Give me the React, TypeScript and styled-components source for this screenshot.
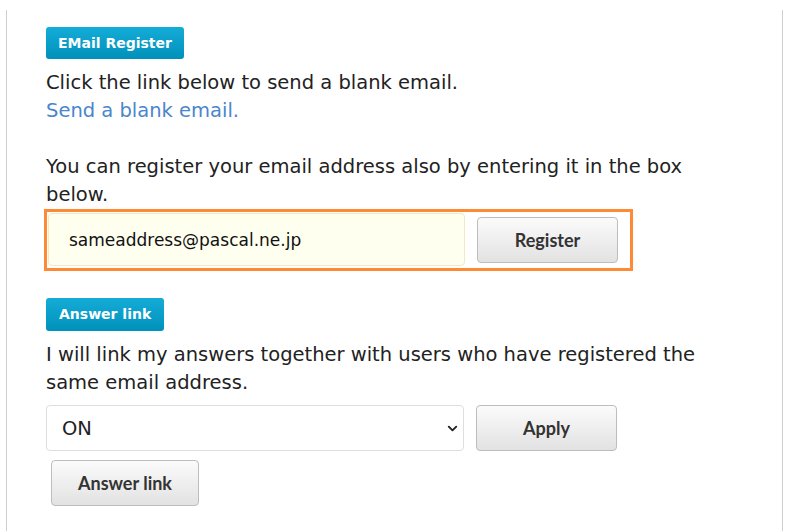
import React from "react";
import styled, { createGlobalStyle } from "styled-components";
import { ChevronDown } from "lucide-react";

const GlobalStyle = createGlobalStyle`
  html, body {
    margin: 0;
    padding: 0;
    background: #fff;
  }
  body {
    font-family: "DejaVu Sans", Verdana, sans-serif;
    color: #222;
  }
`;

const Frame = styled.div`
  margin: 10px 0 0 6px;
  width: 777px;
  min-height: 521px;
  border-left: 1px solid #cfcfcf;
  border-right: 1px solid #cfcfcf;
  box-sizing: border-box;
  padding: 17px 0 0 39px;
`;

const Badge = styled.div`
  display: inline-block;
  height: 32px;
  line-height: 32px;
  padding: 0 12px;
  border-radius: 3px;
  background: linear-gradient(#14acd7, #0091bb);
  color: #fff;
  font-family: "DejaVu Sans", Verdana, sans-serif;
  font-weight: bold;
  font-size: 14px;
`;

const Text = styled.p<{ $gap?: number }>`
  margin: ${(p) => p.$gap ?? 10}px 0 0;
  font-size: 19.5px;
  line-height: 28px;
  width: 670px;
`;

const Link = styled.a`
  color: #4a86cc;
  text-decoration: none;
`;

const Highlight = styled.div`
  display: flex;
  align-items: center;
  gap: 12px;
  width: 589px;
  box-sizing: border-box;
  margin-left: -2px;
  border: 3px solid #ff8a35;
  padding: 1px 12px 2px 1px;
`;

const EmailInput = styled.input`
  width: 417px;
  height: 53px;
  box-sizing: border-box;
  border: 1px solid #efe9c4;
  border-radius: 4px;
  background: #fffff0;
  padding: 0 0 0 20px;
  font-family: "DejaVu Sans", Verdana, sans-serif;
  font-size: 17px;
  color: #111;
  outline: none;
`;

const Button = styled.button<{ $width?: number }>`
  width: ${(p) => p.$width ?? 141}px;
  height: 46px;
  box-sizing: border-box;
  border: 1px solid #bdbdbd;
  border-radius: 4px;
  background: linear-gradient(#fbfbfb, #e2e2e2);
  font-family: Lato, "Liberation Sans", sans-serif;
  font-weight: bold;
  font-size: 18px;
  color: #333;
  cursor: pointer;
`;

const Row = styled.div<{ $gap?: number }>`
  display: flex;
  align-items: center;
  gap: 12px;
  margin-top: ${(p) => p.$gap ?? 0}px;
`;

const SelectBox = styled.div`
  position: relative;
  width: 418px;
  height: 46px;
`;

const Select = styled.select`
  appearance: none;
  width: 100%;
  height: 100%;
  box-sizing: border-box;
  border: 1px solid #dedede;
  border-radius: 4px;
  background: #fff;
  padding: 0 0 0 15px;
  font-family: "DejaVu Sans", Verdana, sans-serif;
  font-size: 19.5px;
  color: #222;
  outline: none;
`;

const Chevron = styled(ChevronDown)`
  position: absolute;
  right: 4px;
  top: 16px;
  pointer-events: none;
`;

const SecondBadge = styled(Badge)`
  margin-top: 27px;
  height: 33px;
  line-height: 33px;
  padding: 0 13px;
`;

const LinkButtonWrap = styled.div`
  margin: 9px 0 0 5px;
`;

export default function App() {
  return (
    <>
      <GlobalStyle />
      <Frame>
        <Badge>EMail Register</Badge>
        <Text>
          Click the link below to send a blank email.
          <br />
          <Link href="#">Send a blank email.</Link>
        </Text>
        <Text $gap={28}>
          You can register your email address also by entering it in the box below.
        </Text>
        <Highlight>
          <EmailInput defaultValue="sameaddress@pascal.ne.jp" />
          <Button>Register</Button>
        </Highlight>
        <SecondBadge>Answer link</SecondBadge>
        <Text>
          I will link my answers together with users who have registered the same email address.
        </Text>
        <Row $gap={8}>
          <SelectBox>
            <Select defaultValue="ON">
              <option value="ON">ON</option>
              <option value="OFF">OFF</option>
            </Select>
            <Chevron size={15} strokeWidth={3} color="#222" />
          </SelectBox>
          <Button>Apply</Button>
        </Row>
        <LinkButtonWrap>
          <Button $width={148}>Answer link</Button>
        </LinkButtonWrap>
      </Frame>
    </>
  );
}
